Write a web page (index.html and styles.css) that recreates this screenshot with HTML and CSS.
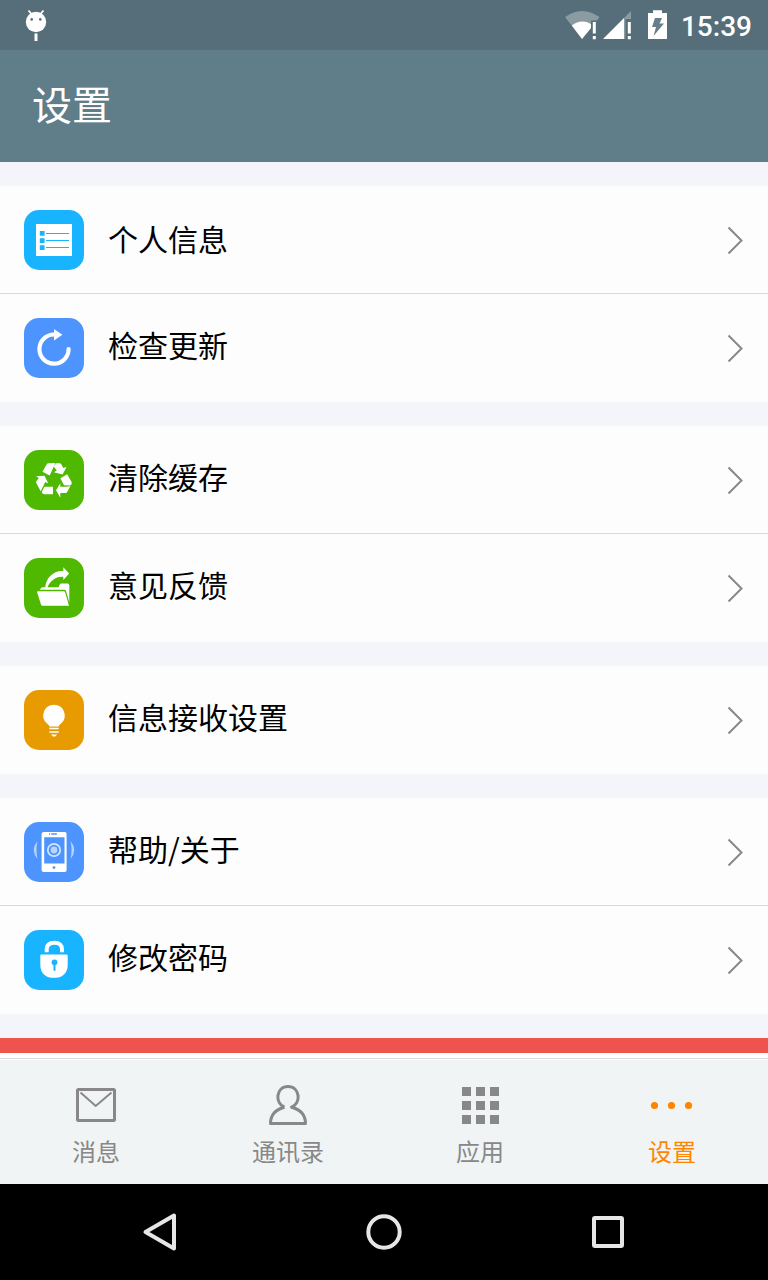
FILE: index.html
```html
<!DOCTYPE html>
<html lang="zh-CN">
<head>
    <meta charset="UTF-8">
    <meta name="viewport" content="width=device-width, initial-scale=1.0">
    <title>设置</title>
    <link rel="stylesheet" href="styles.css">
</head>
<body>

    <div class="status-bar">
        <svg class="droid" width="22" height="32" viewBox="25 9 22 32">
            <path d="M28.5 10.5l3.5 4M43.5 10.5l-3.5 4" stroke="#fff" stroke-width="1.8"/>
            <circle cx="36" cy="22" r="10.2" fill="#fff"/>
            <circle cx="31.7" cy="19.4" r="1.3" fill="#556e79"/>
            <circle cx="40.3" cy="19.4" r="1.3" fill="#556e79"/>
            <path d="M36 33.5V41" stroke="#fff" stroke-width="3"/>
        </svg>
        <svg class="signals" width="104" height="32" viewBox="564 9 104 32">
            <!-- wifi -->
            <path d="M565 17Q582 5 599.5 17L597 20.5H591V28L582 39z" fill="#8a9ba2"/>
            <path d="M571.8 25.5Q581 18.5 591 24V28L582 39z" fill="#fff"/>
            <path d="M592.8 22h3v11.5h-3zM592.8 36h3v3.2h-3z" fill="#fff"/>
            <!-- mobile -->
            <path d="M624 18L631 11V19H625.5V39H624z" fill="#8a9ba2"/>
            <path d="M603 39L624 18V39z" fill="#fff"/>
            <path d="M627.8 22h3v11.5h-3zM627.8 36h3v3.2h-3z" fill="#fff"/>
            <!-- battery -->
            <path d="M653 10.2h9V13h5v26h-19V13h5z" fill="#fff"/>
            <path d="M655 18h7l-2.5 5.5h4.5L653.5 36l2.5-9h-4z" fill="#687f89"/>
        </svg>
        <span class="clock">15:39</span>
    </div>

    <header>设置</header>

    <div class="content">
        <div class="group">
            <div class="item first">
                <svg class="icon blue" viewBox="0 0 60 60">
                    <path d="M12 14h36v32H12z" fill="#fff"/>
                    <path d="M15.8 21h4.8v4.7h-4.8zM15.8 28.2h4.8v4.7h-4.8zM15.8 35.3h4.8V40h-4.8z" fill="#18b4ff"/>
                    <path d="M22 23.5h23M22 30.5h23M22 37.5h23" stroke="#18b4ff"/>
                </svg>
                <span>个人信息</span>
                <svg class="arrow" viewBox="0 0 16 28"><path d="M1.5 1.5L14.5 14.5L1.5 27.5"/></svg>
            </div>
            <div class="item">
                <svg class="icon indigo" viewBox="0 0 60 60">
                    <path d="M30.5 16.5A14.6 14.6 0 1 0 44.6 31" fill="none" stroke="#fff" stroke-width="4.2" stroke-linecap="round"/>
                    <path d="M30 11l8.4 5.8L30 22.4z" fill="#fff"/>
                </svg>
                <span>检查更新</span>
                <svg class="arrow" viewBox="0 0 16 28"><path d="M1.5 1.5L14.5 14.5L1.5 27.5"/></svg>
            </div>
        </div>

        <div class="group">
            <div class="item">
                <svg class="icon green" viewBox="0 0 60 60">
                    <g fill="#fff">
                        <path d="M24.5 13.2L31.5 13L25.7 25.5L18.5 21.7L22.6 14.4Q23.3 13.2 24.5 13.2z"/>
                        <path d="M32.3 13.2H35.5Q36.7 13.2 37.4 14.5L39.3 18L42.5 17L38.6 24.6L30 22.2L32.8 20.6L29.8 16.5z"/>
                        <path d="M43.2 24.3L47.6 32Q48.2 35.3 45.5 35.5L40 35.2L36.3 28.3z"/>
                        <path d="M46.3 36.2L43 42.3Q42.6 43 41.5 43H36.3V47.7L32 40.3L36.3 33.3V36.8H42z"/>
                        <path d="M29 36.7V44.3H20.5Q18.5 44.3 17.7 42L20.5 36.7z"/>
                        <path d="M12 26.3L20.5 25.8L24.3 33.4L21.3 32L16.7 41.3L12.3 33Q11.9 32 12.5 31L14.8 27.9z"/>
                    </g>
                </svg>
                <span>清除缓存</span>
                <svg class="arrow" viewBox="0 0 16 28"><path d="M1.5 1.5L14.5 14.5L1.5 27.5"/></svg>
            </div>
            <div class="item">
                <svg class="icon green" viewBox="0 0 60 60">
                    <path d="M15.5 31.7L18 29.3H34.5L35.5 27Q36 25.6 37.5 25.6H43.5Q45.3 25.6 45.3 27.5V44.5L42 33Q41.6 31.7 40 31.7z" fill="#fff"/>
                    <path d="M14 33.2H39.8Q40.8 33.2 41.2 34.5L45 47.8H18.5Q17.5 47.8 17 46.5L13.2 34.6Q12.8 33.2 14 33.2z" fill="#fff"/>
                    <path d="M21.2 30.4C21.5 20 29.5 12.3 39.3 13V9.2L45.2 15.5L39.3 22V18.8C31.5 18.3 26 23 23 30.4z" fill="#fff"/>
                </svg>
                <span>意见反馈</span>
                <svg class="arrow" viewBox="0 0 16 28"><path d="M1.5 1.5L14.5 14.5L1.5 27.5"/></svg>
            </div>
        </div>

        <div class="group">
            <div class="item">
                <svg class="icon orange" viewBox="0 0 60 60">
                    <path d="M30 14.7A10.7 10.7 0 0 1 37 33.5Q34.8 35 34.6 36.5H25.4Q25.2 35 23 33.5A10.7 10.7 0 0 1 30 14.7z" fill="#fff"/>
                    <path d="M25.3 38.4h9.4M25.3 41.9h9.4" stroke="#fff" stroke-width="1.5"/>
                    <path d="M27 44.6h6.2l-2 1.8h-2.3z" fill="#fff"/>
                </svg>
                <span>信息接收设置</span>
                <svg class="arrow" viewBox="0 0 16 28"><path d="M1.5 1.5L14.5 14.5L1.5 27.5"/></svg>
            </div>
        </div>

        <div class="group">
            <div class="item">
                <svg class="icon indigo" viewBox="0 0 60 60">
                    <rect x="17.6" y="10" width="25" height="40" rx="2" fill="#fff"/>
                    <path d="M20.2 15.2h20.3v26.2H20.2z" fill="#4d94ff"/>
                    <circle cx="30" cy="28" r="6.2" fill="none" stroke="#d5e5ff" stroke-width="1.7"/>
                    <circle cx="30" cy="28" r="3.4" fill="#b8d3ff"/>
                    <circle cx="30" cy="45.6" r="1.4" fill="#4d94ff"/>
                    <path d="M25 12.1h1.2M27.3 12.1h5.6" stroke="#4d94ff" stroke-width="1.5"/>
                    <path d="M13.5 19Q6 28 13.5 37Q11.5 28 13.5 19zM46.5 19Q54 28 46.5 37Q48.5 28 46.5 19z" fill="#b8d3ff"/>
                </svg>
                <span>帮助/关于</span>
                <svg class="arrow" viewBox="0 0 16 28"><path d="M1.5 1.5L14.5 14.5L1.5 27.5"/></svg>
            </div>
            <div class="item">
                <svg class="icon blue" viewBox="0 0 60 60">
                    <path d="M22.7 22.3V19.5Q22.7 12.8 30.4 12.8T38 19.5V22.3" fill="none" stroke="#fff" stroke-width="4"/>
                    <path d="M17.5 24.5H42.5Q43.7 24.5 43.7 25.7V35C43.7 42 39 47.8 32 47.8H28C21 47.8 16.3 42 16.3 35V25.7Q16.3 24.5 17.5 24.5z" fill="#fff"/>
                    <circle cx="30.5" cy="32.3" r="2.9" fill="#18b4ff"/>
                    <path d="M30.5 33v7" stroke="#18b4ff" stroke-width="2" stroke-linecap="round"/>
                </svg>
                <span>修改密码</span>
                <svg class="arrow" viewBox="0 0 16 28"><path d="M1.5 1.5L14.5 14.5L1.5 27.5"/></svg>
            </div>
        </div>

        <!-- top edge of the exit button, the rest is below the tabs -->
        <div class="exit"></div>
    </div>

    <div class="tabs">
        <div class="tab">
            <svg width="48" height="48" viewBox="0 0 48 48">
                <rect x="5.5" y="7.5" width="37" height="31" rx="1" fill="none" stroke="#888" stroke-width="3"/>
                <path d="M8.5 10.5L23.7 24L39.5 10.5" fill="none" stroke="#888" stroke-width="2"/>
            </svg>
            <span>消息</span>
        </div>
        <div class="tab">
            <svg width="48" height="48" viewBox="0 0 48 48">
                <path d="M20.5 25.2C10.5 21.5 11.8 4.5 24 4.5S37.5 21.5 27.5 25.2C36.5 27.5 41.5 33.5 41.5 41.5H6.5C6.5 33.5 11.5 27.5 20.5 25.2" fill="none" stroke="#888" stroke-width="3" stroke-linejoin="round"/>
            </svg>
            <span>通讯录</span>
        </div>
        <div class="tab">
            <svg width="48" height="48" viewBox="0 0 48 48">
                <path d="M6 5h9v9H6zM20 5h9v9h-9zM34 5h9v9h-9zM6 19h9v9H6zM20 19h9v9h-9zM34 19h9v9h-9zM6 33h9v9H6zM20 33h9v9h-9zM34 33h9v9h-9z" fill="#888"/>
            </svg>
            <span>应用</span>
        </div>
        <div class="tab active">
            <svg width="48" height="48" viewBox="0 0 48 48" fill="#ff8500">
                <circle cx="6.5" cy="23.5" r="3.6"/>
                <circle cx="23.5" cy="23.5" r="3.6"/>
                <circle cx="40.5" cy="23.5" r="3.6"/>
            </svg>
            <span>设置</span>
        </div>
    </div>

    <div class="nav-bar">
        <svg width="40" height="40" viewBox="0 0 40 40"><path d="M5.5 20L34 3.5V36.5z"/></svg>
        <svg width="40" height="40" viewBox="0 0 40 40"><circle cx="20" cy="20" r="15.7"/></svg>
        <svg width="40" height="40" viewBox="0 0 40 40"><rect x="6" y="6" width="28" height="28" rx="1"/></svg>
    </div>

</body>
</html>
```

FILE: styles.css
```css
* {
    box-sizing: border-box;
}

body {
    margin: 0;
    width: 768px;
    height: 1280px;
    overflow: hidden;
    display: flex;
    flex-direction: column;
    background: #f3f5fa;
    color: #000;
    font-family: "Noto Sans CJK SC", sans-serif;
}

svg {
    display: block;
    flex: none;
}

/* STATUS BAR */
.status-bar {
    height: 50px;
    padding: 0 16px 0 25px;
    display: flex;
    align-items: center;
    background: #556e79;
}

.signals {
    margin-left: auto;
    margin-right: 13px;
}

.clock {
    color: #fff;
    font: 500 28px/32px Roboto, sans-serif;
    padding-top: 3px;
}

/* HEADER */
header {
    height: 112px;
    padding-left: 32px;
    background: #607d8a;
    color: #fff;
    font-size: 40px;
    line-height: 107px;
}

/* LIST */
.content {
    flex: 1;
    padding-top: 24px;
    overflow: hidden;
}

.group {
    margin-bottom: 24px;
    background: #fdfdfd;
}

.item {
    height: 108px;
    padding: 0 25px 0 24px;
    display: flex;
    align-items: center;
}

.item:not(:last-child) {
    border-bottom: 1px solid #d9d9d9;
    padding-top: 1px;
}

.item span {
    flex: 1;
    margin-left: 24px;
    font-size: 30px;
    line-height: 40px;
    padding-bottom: 8px;
}

.item.first span {
    padding-bottom: 4px;
}

.icon {
    width: 60px;
    height: 60px;
    border-radius: 15px;
}

.blue {
    background: #18b4ff;
}

.indigo {
    background: #4d94ff;
}

.green {
    background: #4fb800;
}

.orange {
    background: #e89b00;
}

.arrow {
    width: 16px;
    height: 28px;
}

.arrow path {
    fill: none;
    stroke: #888;
    stroke-width: 2;
}

.exit {
    height: 40px;
    background: #ef534e;
}

/* TABS */
.tabs {
    height: 131px;
    padding-top: 22px;
    display: flex;
    border-top: 5px solid #fff;
    background: linear-gradient(#d9d9d9 1px, #fff 1px, #fff 2px, #f0f4f5 2px);
}

.tab {
    flex: 1;
    display: flex;
    flex-direction: column;
    align-items: center;
    color: #888;
    font-size: 24px;
    line-height: 36px;
}

.tab svg {
    margin: 2px 0 3px;
}

.active {
    color: #ff8500;
}

/* NAVIGATION */
.nav-bar {
    height: 96px;
    padding: 0 140px;
    display: flex;
    align-items: center;
    justify-content: space-between;
    background: #000;
}

.nav-bar path,
.nav-bar circle,
.nav-bar rect {
    fill: none;
    stroke: #e6e6e6;
    stroke-width: 4;
    stroke-linejoin: round;
}
```
